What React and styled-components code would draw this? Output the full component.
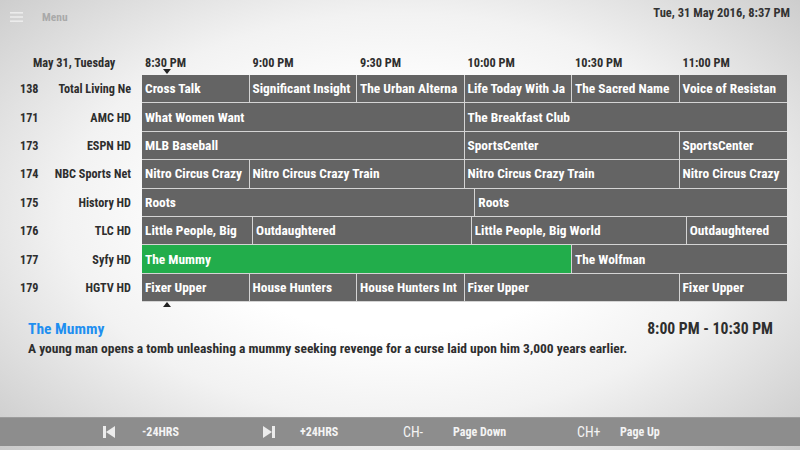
import React from 'react';
import styled, { createGlobalStyle } from 'styled-components';

const GlobalStyle = createGlobalStyle`
  body {
    margin: 0;
    font-family: "Roboto Condensed", "Liberation Sans Narrow", "DejaVu Sans Condensed", Roboto, sans-serif;
  }
`;

const SLOT = 107.5; // px per 30 minutes

const Page = styled.div`
  position: relative;
  width: 800px;
  height: 450px;
  overflow: hidden;
  display: flex;
  flex-direction: column;
  background: radial-gradient(ellipse 70% 75% at 50% 48%, #ffffff 35%, #f2f2f2 60%, #c9c9c9 100%);
`;

const TopBar = styled.div`
  height: 35px;
  display: flex;
  align-items: flex-start;
  padding: 0 10px;
`;

const MenuButton = styled.div`
  display: flex;
  align-items: center;
  gap: 19px;
  margin-top: 10px;
  color: #a9a9a9;
  font-size: 11.5px;
  font-weight: 700;
`;

const Clock = styled.div`
  margin-left: auto;
  margin-top: 5px;
  color: #333;
  font-size: 12.5px;
  font-weight: 700;
`;

const HeaderRow = styled.div`
  display: flex;
  height: 40px;
  align-items: flex-end;
  padding-bottom: 5px;
  box-sizing: border-box;
  color: #2e2e2e;
  font-size: 12.3px;
  font-weight: 700;
`;

const DayLabel = styled.div`
  width: 142px;
  padding-left: 33px;
  box-sizing: border-box;
`;

const TimeLabel = styled.div`
  width: ${SLOT}px;
  padding-left: 3px;
  box-sizing: border-box;
`;

const Guide = styled.div`
  display: flex;
  flex-direction: column;
`;

const Row = styled.div`
  display: flex;
  height: 28.4px;
`;

const Channel = styled.div`
  width: 142px;
  padding: 0 11px 0 20px;
  box-sizing: border-box;
  display: flex;
  justify-content: space-between;
  align-items: center;
  color: #2e2e2e;
  font-size: 12.2px;
  font-weight: 700;
  white-space: nowrap;
`;

const Track = styled.div`
  display: flex;
  width: 645px;
`;

const Cell = styled.div`
  flex: none;
  box-sizing: border-box;
  height: 100%;
  padding-left: 3px;
  display: flex;
  align-items: center;
  overflow: hidden;
  white-space: nowrap;
  color: #fff;
  font-size: 13.4px;
  font-weight: 700;
  background: ${p => (p.$active ? '#22ad4b' : '#646464')};
  border-right: 1.5px solid #d4d4d4;
  border-bottom: 1.5px solid #d4d4d4;
  &:last-child {
    border-right: none;
  }
`;

const Marker = styled.div`
  position: absolute;
  left: 163px;
  top: ${p => p.$top}px;
  width: 0;
  height: 0;
  border-left: 4px solid transparent;
  border-right: 4px solid transparent;
  ${p => (p.$up ? 'border-bottom: 5px solid #222;' : 'border-top: 5px solid #222;')}
`;

const Details = styled.div`
  padding: 17px 27px 0 28px;
`;

const DetailHead = styled.div`
  display: flex;
  justify-content: space-between;
  align-items: center;
`;

const Title = styled.div`
  color: #1f8ff0;
  font-size: 15.5px;
  font-weight: 700;
`;

const Airtime = styled.div`
  color: #2e2e2e;
  font-size: 15.7px;
  font-weight: 700;
`;

const Synopsis = styled.div`
  margin-top: 2px;
  color: #2e2e2e;
  font-size: 13.5px;
  font-weight: 700;
`;

const BottomBar = styled.div`
  margin-top: auto;
  margin-bottom: 4px;
  height: 28px;
  background: #8d8d8d;
  border-top: 1px solid #9c9c9c;
  display: flex;
  align-items: center;
  padding-left: 103px;
  color: #f4f4f4;
`;

const Control = styled.div`
  display: flex;
  align-items: center;
  width: ${p => p.$w}px;
`;

const Key = styled.div`
  width: ${p => p.$w}px;
  font-size: 14px;
  display: flex;
  align-items: center;
`;

const KeyLabel = styled.span`
  font-size: 12px;
  font-weight: 700;
`;

const SkipIcon = ({ flip }) => (
  <svg width="12" height="12" viewBox="0 0 12 12" style={flip ? { transform: 'scaleX(-1)' } : undefined}>
    <rect x="0" y="0" width="3" height="12" fill="#ececec" />
    <polygon points="12,0 12,12 3,6" fill="#ececec" />
  </svg>
);

const Hamburger = () => (
  <svg width="13" height="10" viewBox="0 0 13 10">
    <rect x="0" y="0" width="13" height="1.6" fill="#ececec" />
    <rect x="0" y="4.2" width="13" height="1.6" fill="#ececec" />
    <rect x="0" y="8.4" width="13" height="1.6" fill="#ececec" />
  </svg>
);

// durations in minutes, starting at 8:30 PM
const channels = [
  { num: '138', name: 'Total Living Ne', shows: [['Cross Talk', 30], ['Significant Insight', 30], ['The Urban Alterna', 30], ['Life Today With Ja', 30], ['The Sacred Name', 30], ['Voice of Resistan', 30]] },
  { num: '171', name: 'AMC HD', shows: [['What Women Want', 90], ['The Breakfast Club', 90]] },
  { num: '173', name: 'ESPN HD', shows: [['MLB Baseball', 90], ['SportsCenter', 60], ['SportsCenter', 30]] },
  { num: '174', name: 'NBC Sports Net', shows: [['Nitro Circus Crazy', 30], ['Nitro Circus Crazy Train', 60], ['Nitro Circus Crazy Train', 60], ['Nitro Circus Crazy', 30]] },
  { num: '175', name: 'History HD', shows: [['Roots', 93], ['Roots', 87]] },
  { num: '176', name: 'TLC HD', shows: [['Little People, Big', 31], ['Outdaughtered', 61], ['Little People, Big World', 60], ['Outdaughtered', 28]] },
  { num: '177', name: 'Syfy HD', shows: [['The Mummy', 120, true], ['The Wolfman', 60]] },
  { num: '179', name: 'HGTV HD', shows: [['Fixer Upper', 30], ['House Hunters', 30], ['House Hunters Int', 30], ['Fixer Upper', 60], ['Fixer Upper', 30]] },
];

const times = ['8:30 PM', '9:00 PM', '9:30 PM', '10:00 PM', '10:30 PM', '11:00 PM'];

export default function App() {
  return (
    <Page>
      <GlobalStyle />
      <TopBar>
        <MenuButton>
          <Hamburger />
          <span>Menu</span>
        </MenuButton>
        <Clock>Tue, 31 May 2016, 8:37 PM</Clock>
      </TopBar>

      <HeaderRow>
        <DayLabel>May 31, Tuesday</DayLabel>
        {times.map(t => (
          <TimeLabel key={t}>{t}</TimeLabel>
        ))}
      </HeaderRow>
      <Marker $top={69} />

      <Guide>
        {channels.map(ch => (
          <Row key={ch.num}>
            <Channel>
              <span>{ch.num}</span>
              <span>{ch.name}</span>
            </Channel>
            <Track>
              {ch.shows.map(([title, mins, active], i) => (
                <Cell key={i} $active={active} style={{ width: (mins / 30) * SLOT }}>
                  {title}
                </Cell>
              ))}
            </Track>
          </Row>
        ))}
      </Guide>
      <Marker $up $top={302} />

      <Details>
        <DetailHead>
          <Title>The Mummy</Title>
          <Airtime>8:00 PM - 10:30 PM</Airtime>
        </DetailHead>
        <Synopsis>
          A young man opens a tomb unleashing a mummy seeking revenge for a curse laid upon him 3,000 years earlier.
        </Synopsis>
      </Details>

      <BottomBar>
        <Control $w={160}>
          <Key $w={39}><SkipIcon /></Key>
          <KeyLabel>-24HRS</KeyLabel>
        </Control>
        <Control $w={140}>
          <Key $w={37}><SkipIcon flip /></Key>
          <KeyLabel>+24HRS</KeyLabel>
        </Control>
        <Control $w={174}>
          <Key $w={50}>CH-</Key>
          <KeyLabel>Page Down</KeyLabel>
        </Control>
        <Control $w={120}>
          <Key $w={43}>CH+</Key>
          <KeyLabel>Page Up</KeyLabel>
        </Control>
      </BottomBar>
    </Page>
  );
}
